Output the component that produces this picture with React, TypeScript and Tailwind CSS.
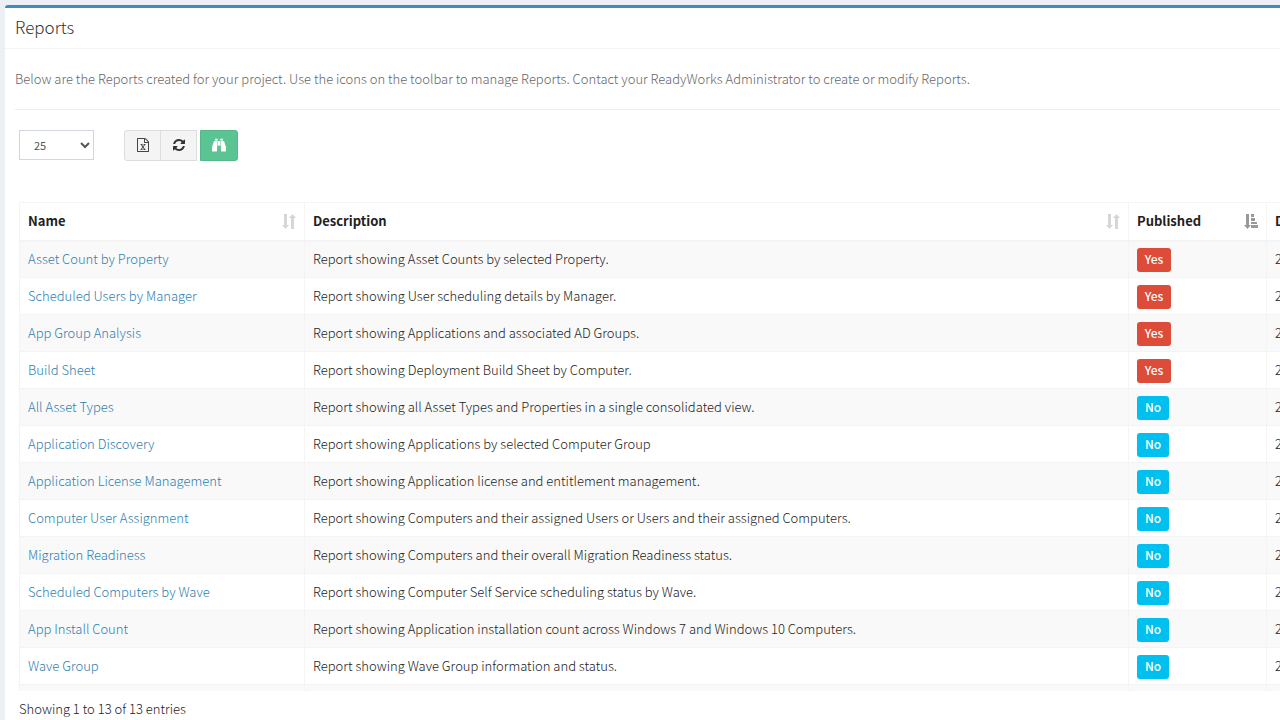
import type { ReactNode } from "react";

type Report = {
    name: string;
    description: string;
    published: boolean;
}

const reports: Report[] = [
    { name: "Asset Count by Property", description: "Report showing Asset Counts by selected Property.", published: true },
    { name: "Scheduled Users by Manager", description: "Report showing User scheduling details by Manager.", published: true },
    { name: "App Group Analysis", description: "Report showing Applications and associated AD Groups.", published: true },
    { name: "Build Sheet", description: "Report showing Deployment Build Sheet by Computer.", published: true },
    { name: "All Asset Types", description: "Report showing all Asset Types and Properties in a single consolidated view.", published: false },
    { name: "Application Discovery", description: "Report showing Applications by selected Computer Group", published: false },
    { name: "Application License Management", description: "Report showing Application license and entitlement management.", published: false },
    { name: "Computer User Assignment", description: "Report showing Computers and their assigned Users or Users and their assigned Computers.", published: false },
    { name: "Migration Readiness", description: "Report showing Computers and their overall Migration Readiness status.", published: false },
    { name: "Scheduled Computers by Wave", description: "Report showing Computer Self Service scheduling status by Wave.", published: false },
    { name: "App Install Count", description: "Report showing Application installation count across Windows 7 and Windows 10 Computers.", published: false },
    { name: "Wave Group", description: "Report showing Wave Group information and status.", published: false },
];

function ExcelIcon() {
    return (
        <svg className="h-[14px] w-3" viewBox="0 0 1536 1792" fill="currentColor" aria-hidden="true">
            <path d="M1468 380q28 28 48 76t20 88v1152q0 40-28 68t-68 28h-1344q-40 0-68-28t-28-68v-1600q0-40 28-68t68-28h896q40 0 88 20t76 48zm-444-244v376h376q-10-29-22-41l-313-313q-12-12-41-22zm384 1528v-1024h-416q-40 0-68-28t-28-68v-416h-768v1536h1280zm-979-234v106h281v-106h-75l103-161q5-7 10-16.5t7.5-13.5 3.5-4h2q1 4 5 10 2 4 4.5 7.5t6 8 6.5 8.5l107 161h-76v106h291v-106h-68l-192-273 195-282h67v-107h-279v107h74l-103 159q-4 7-10 16.5t-9 13.5l-2 3h-2q-1-4-5-10-6-11-17-23l-106-159h76v-107h-290v107h68l189 272-194 283h-68z" />
        </svg>
    )
}

function RefreshIcon() {
    return (
        <svg className="size-3" viewBox="0 0 1536 1536" fill="currentColor" aria-hidden="true">
            <path d="M1511 928q0 5-1 7-64 268-268 434.5t-478 166.5q-146 0-282.5-55t-243.5-157l-129 129q-19 19-45 19t-45-19-19-45v-448q0-26 19-45t45-19h448q26 0 45 19t19 45-19 45l-137 137q71 66 161 102t187 36q134 0 250-65t186-179q11-17 53-117 8-23 30-23h192q13 0 22.5 9.5t9.5 22.5zm25-800v448q0 26-19 45t-45 19h-448q-26 0-45-19t-19-45 19-45l138-138q-148-137-349-137-134 0-250 65t-186 179q-11 17-53 117-8 23-30 23h-199q-13 0-22.5-9.5t-9.5-22.5v-7q65-268 270-434.5t480-166.5q146 0 284 55.5t245 156.5l130-129q19-19 45-19t45 19 19 45z" />
        </svg>
    )
}

function BinocularsIcon() {
    return (
        <svg className="h-[14px] w-[14px]" viewBox="0 -128 1792 1664" fill="currentColor" aria-hidden="true">
            <path d="M704 192v640q0 26-19 45t-45 19v576q0 26-19 45t-45 19h-512q-26 0-45-19t-19-45v-512l249-745q7-23 31-23h424zM1024 192v576h-256v-576h256zM1792 960v512q0 26-19 45t-45 19h-512q-26 0-45-19t-19-45v-576q-26 0-45-19t-19-45v-640h424q24 0 31 23zM736 -64v192h-352v-192q0-14 9-23t23-9h288q14 0 23 9t9 23zM1408 -64v192h-352v-192q0-14 9-23t23-9h288q14 0 23 9t9 23z" />
        </svg>
    )
}

function SortIcon() {
    return (
        <svg className="h-[15px] w-[14px] text-[#d6d6d6]" viewBox="0 0 14 15" fill="currentColor" aria-hidden="true">
            <path d="M2 0h3v11h2l-3.500 4L0 11h2zM9 15V4H7l3.500-4L14 4h-2v11z" />
        </svg>
    )
}

function SortAscIcon() {
    return (
        <svg className="h-[15px] w-[14px] text-[#999]" viewBox="0 0 14 15" fill="currentColor" aria-hidden="true">
            <path d="M2 0h3v11h2l-3.500 4L0 11h2zM7 0h3v3H7zM7 4h4v3H7zM7 8h6v2H7zM7 11h7v3H7z" />
        </svg>
    )
}

function HeaderCell({ children, icon }: { children: ReactNode; icon: ReactNode }) {
    return (
        <th className="h-[38px] border border-b-2 border-[#f4f4f4] px-2 text-left font-bold">
            <div className="flex items-center justify-between">
                <span>{children}</span>
                {icon}
            </div>
        </th>
    )
}

export default function App() {
    return (
        <div className="min-h-screen overflow-x-hidden bg-[#ecf0f5] pt-[5px] pl-[5px] font-['Noto_Sans_CJK_SC','Open_Sans',sans-serif] text-[13px] leading-5 font-light text-[#222]">
            <main className="min-h-screen rounded-tl-[3px] border-t-3 border-[#3c8dbc] bg-white">
                <header className="border-b border-[#f4f4f4] pt-[9px] pb-[11px] pl-[10px]">
                    <h1 className="text-[17px] leading-5 text-[#333]">Reports</h1>
                </header>

                <div className="pt-5 pl-[10px]">
                    <p className="border-b border-[#eee] pb-5 text-[#666]">
                        Below are the Reports created for your project. Use the icons on the toolbar to manage Reports. Contact your ReadyWorks Administrator to create or modify Reports.
                    </p>

                    <div className="pt-5 pl-1">
                        <div className="flex h-[31px] items-start">
                            <select aria-label="Entries per page" defaultValue="25" className="h-[30px] w-[75px] border border-[#d2d6de] bg-white px-[10px] text-[11px] font-normal text-[#555]">
                                <option>10</option>
                                <option>25</option>
                                <option>50</option>
                                <option>100</option>
                            </select>
                            <div className="ml-[30px] flex">
                                <button type="button" aria-label="Export to Excel" className="flex h-[31px] w-[37px] items-center justify-center rounded-l-[3px] border border-[#ddd] bg-[#f4f4f4] pb-px text-[#444]">
                                    <ExcelIcon />
                                </button>
                                <button type="button" aria-label="Refresh" className="-ml-px flex h-[31px] w-[37px] items-center justify-center border border-[#ddd] bg-[#f4f4f4] pb-px text-[#333]">
                                    <RefreshIcon />
                                </button>
                                <button type="button" aria-label="Search" className="ml-[3px] flex h-[31px] w-[38px] items-center justify-center rounded-r-[3px] border border-[#57b78a] bg-[#5bc493] pb-px text-white">
                                    <BinocularsIcon />
                                </button>
                            </div>
                        </div>

                        <div className="mt-[41px] max-h-[489px] overflow-hidden">
                            <table className="w-[calc(100%+121px)] table-fixed border-collapse">
                                <colgroup>
                                    <col className="w-[285px]" />
                                    <col />
                                    <col className="w-[138px]" />
                                    <col className="w-[134px]" />
                                </colgroup>
                                <thead>
                                    <tr>
                                        <HeaderCell icon={<SortIcon />}>Name</HeaderCell>
                                        <HeaderCell icon={<SortIcon />}>Description</HeaderCell>
                                        <HeaderCell icon={<SortAscIcon />}>Published</HeaderCell>
                                        <HeaderCell icon={<SortIcon />}>Date</HeaderCell>
                                    </tr>
                                </thead>
                                <tbody>
                                    {reports.map((report) => (
                                        <tr key={report.name} className="h-[37px] odd:bg-[#f9f9f9]">
                                            <td className="border border-[#f4f4f4] px-2">
                                                <a href="#" className="text-[#2f7fb0]">{report.name}</a>
                                            </td>
                                            <td className="border border-[#f4f4f4] px-2">{report.description}</td>
                                            <td className="border border-[#f4f4f4] px-2 pt-[2px]">
                                                {report.published
                                                    ? <span className="flex h-6 w-[34px] items-center justify-center rounded-[3px] bg-[#dd4b39] pb-[2px] text-xs font-medium text-white">Yes</span>
                                                    : <span className="flex h-6 w-8 items-center justify-center rounded-[3px] bg-[#00c0ef] pb-[2px] text-xs font-medium text-white">No</span>}
                                            </td>
                                            <td className="border border-[#f4f4f4] px-2">2020</td>
                                        </tr>
                                    ))}
                                    {/* last row is clipped by the scroll area */}
                                    <tr className="h-[37px] odd:bg-[#f9f9f9]">
                                        <td className="border border-[#f4f4f4]" />
                                        <td className="border border-[#f4f4f4]" />
                                        <td className="border border-[#f4f4f4]" />
                                        <td className="border border-[#f4f4f4]" />
                                    </tr>
                                </tbody>
                            </table>
                        </div>

                        <p className="pt-2">Showing 1 to 13 of 13 entries</p>
                    </div>
                </div>
            </main>
        </div>
    )
}
